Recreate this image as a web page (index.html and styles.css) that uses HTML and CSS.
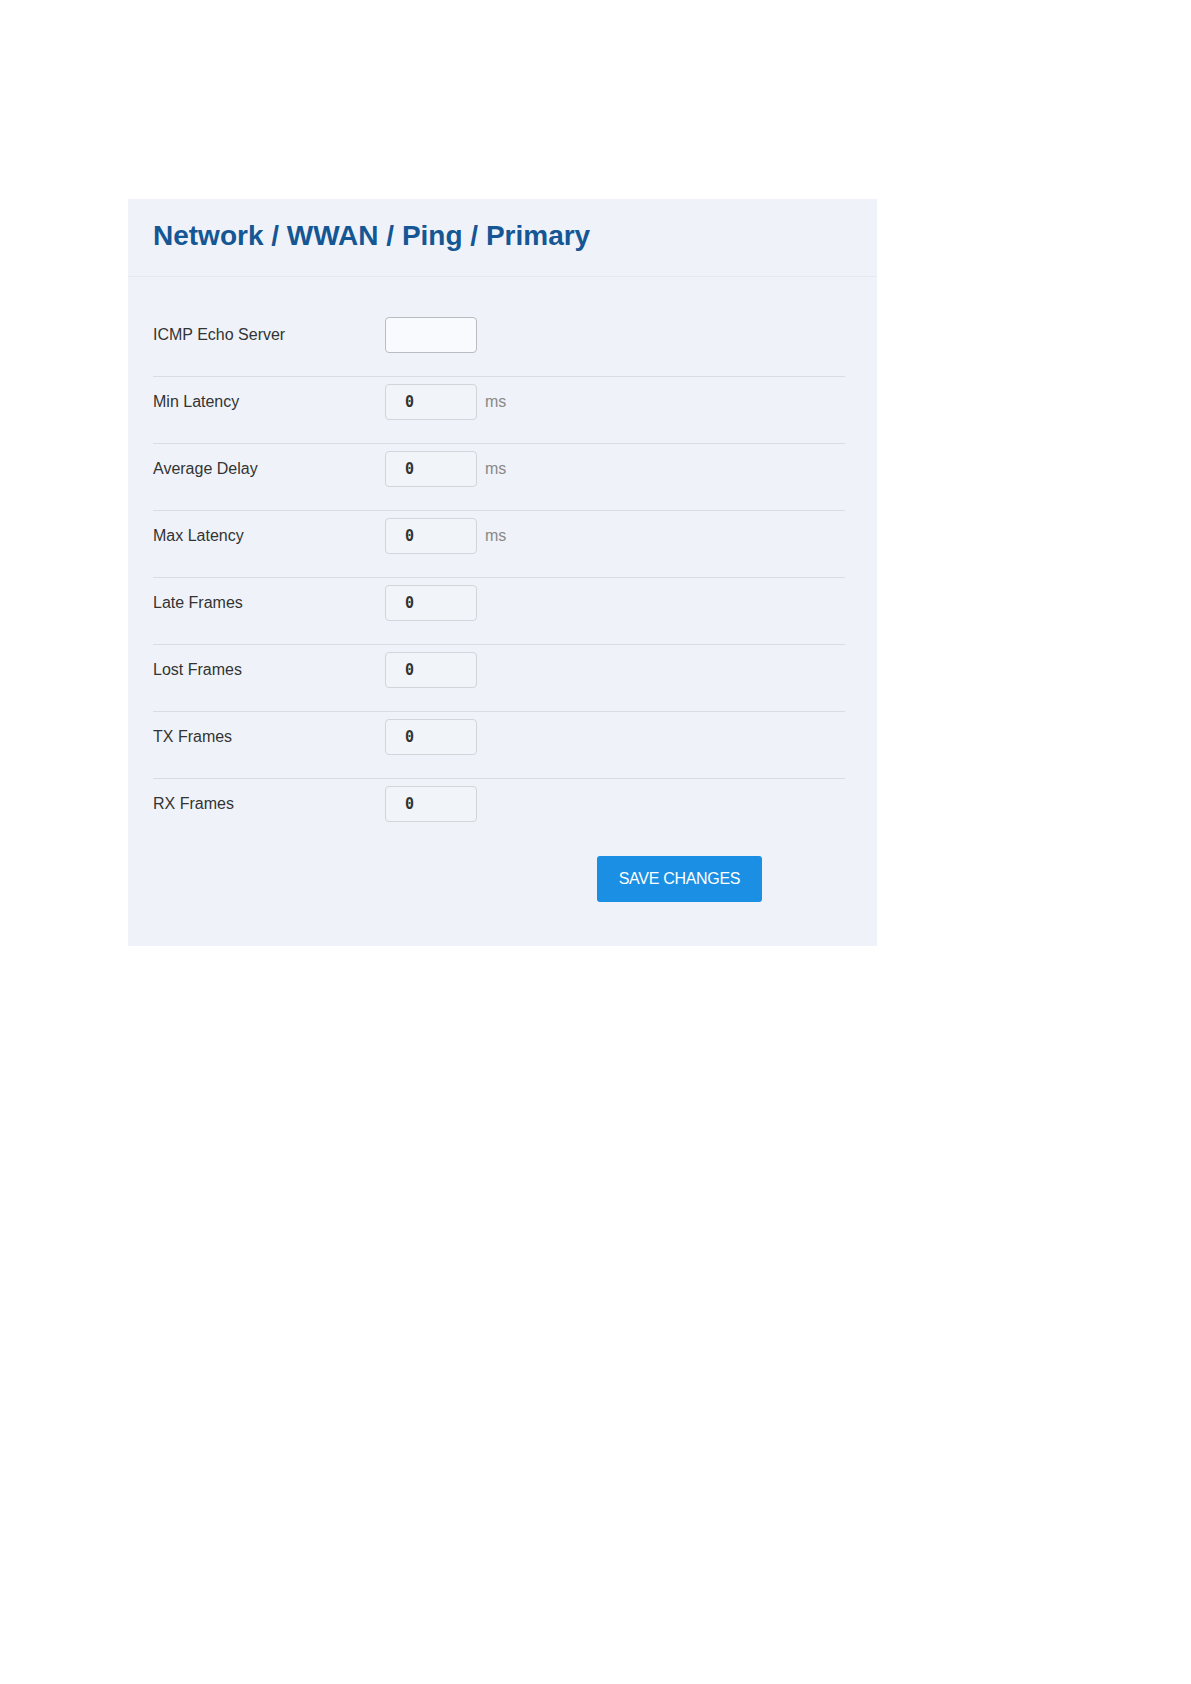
FILE: index.html
```html
<!DOCTYPE html>
<html lang="en">
<head>
    <meta charset="UTF-8">
    <meta name="viewport" content="width=device-width, initial-scale=1.0">
    <title>Network / WWAN / Ping / Primary</title>
    <link rel="stylesheet" href="styles.css">
</head>
<body>

    <div class="panel">
        <div class="panel-header">
            <h2>Network / WWAN / Ping / Primary</h2>
        </div>
        <form class="panel-body" id="pingForm">
            <div class="row">
                <label for="server">ICMP Echo Server</label>
                <input type="text" id="server" class="field editable">
            </div>
            <div class="row">
                <label for="minLatency">Min Latency</label>
                <input type="text" id="minLatency" class="field" value="0" readonly>
                <span class="unit">ms</span>
            </div>
            <div class="row">
                <label for="avgDelay">Average Delay</label>
                <input type="text" id="avgDelay" class="field" value="0" readonly>
                <span class="unit">ms</span>
            </div>
            <div class="row">
                <label for="maxLatency">Max Latency</label>
                <input type="text" id="maxLatency" class="field" value="0" readonly>
                <span class="unit">ms</span>
            </div>
            <div class="row">
                <label for="lateFrames">Late Frames</label>
                <input type="text" id="lateFrames" class="field" value="0" readonly>
            </div>
            <div class="row">
                <label for="lostFrames">Lost Frames</label>
                <input type="text" id="lostFrames" class="field" value="0" readonly>
            </div>
            <div class="row">
                <label for="txFrames">TX Frames</label>
                <input type="text" id="txFrames" class="field" value="0" readonly>
            </div>
            <div class="row last">
                <label for="rxFrames">RX Frames</label>
                <input type="text" id="rxFrames" class="field" value="0" readonly>
            </div>
            <button type="submit">Save Changes</button>
        </form>
    </div>

</body>
</html>
```

FILE: styles.css
```css
* {
    box-sizing: border-box;
}
body {
    font-family: "Liberation Sans", Arial, sans-serif;
    margin: 0;
    padding: 0;
    background-color: white;
}
.panel {
    width: 749px;
    margin: 199px 0 0 128px;
    background-color: #eff3f9;
}
.panel-header {
    padding: 21px 25px 24px;
    border-bottom: 1px solid #e4e9f0;
}
.panel-header h2 {
    margin: 0;
    font-size: 28px;
    line-height: 32px;
    font-weight: bold;
    color: #155694;
}
.panel-body {
    padding: 33px 32px 44px 25px;
}
.row {
    display: flex;
    align-items: center;
    padding: 7px 0 23px;
    border-bottom: 1px solid #d9dde3;
}
.row.last {
    border-bottom: none;
}
.row label {
    width: 232px;
    font-size: 16px;
    color: #333;
}
.field {
    width: 92px;
    height: 36px;
    padding: 0 0 0 19px;
    border: 1px solid #d2d5da;
    border-radius: 4px;
    background-color: #f1f4f8;
    font-family: "DejaVu Sans Mono", monospace;
    font-size: 15px;
    font-weight: bold;
    color: #333;
}
.field.editable {
    background-color: #f8fafd;
    border-color: #b9bcc1;
}
.unit {
    margin-left: 8px;
    font-size: 16px;
    color: #888;
}
button {
    display: block;
    margin: 11px 0 0 444px;
    width: 165px;
    height: 46px;
    padding: 0;
    background-color: #1a8fe3; /* blu del bottone */
    color: white;
    border: none;
    border-radius: 3px;
    font-family: "Liberation Sans", Arial, sans-serif;
    font-size: 16px;
    text-transform: uppercase;
    letter-spacing: -0.3px;
    cursor: pointer;
}
button:hover {
    background-color: #1479c4;
}
```
